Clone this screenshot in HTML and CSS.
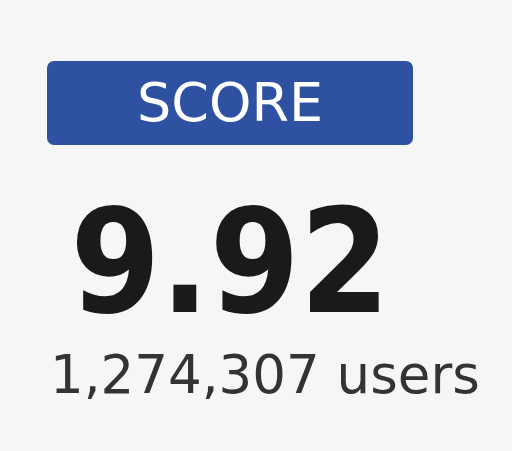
FILE: index.html
```html
<!DOCTYPE html>
<html>
<head>
<meta charset="utf-8">
<link rel="stylesheet" href="styles.css">
</head>
<body>
<div class="score-box">
  <div class="badge">SCORE</div>
  <div class="score">9.92</div>
  <div class="users">1,274,307 users</div>
</div>
</body>
</html>
```
FILE: styles.css
```css
html, body {
  margin: 0;
  padding: 0;
  background: #f6f6f6;
}
.score-box {
  display: flex;
  flex-direction: column;
  align-items: flex-start;
  padding: 61px 0 0 47px;
  font-family: "DejaVu Sans", Verdana, sans-serif;
}
.badge {
  width: 366px;
  height: 84px;
  line-height: 84px;
  background: #2e51a2;
  border-radius: 7px;
  color: #ffffff;
  font-size: 54px;
  text-align: center;
}
.score {
  width: 366px;
  margin-top: 45px;
  font-family: "DejaVu Sans Condensed", "DejaVu Sans", sans-serif;
  font-stretch: condensed;
  font-weight: bold;
  font-size: 144px;
  line-height: 144px;
  color: #1a1a1a;
  text-align: center;
}
.users {
  margin-top: 14px;
  margin-left: 3px;
  font-size: 53px;
  line-height: 53px;
  color: #333333;
  white-space: nowrap;
}
```
